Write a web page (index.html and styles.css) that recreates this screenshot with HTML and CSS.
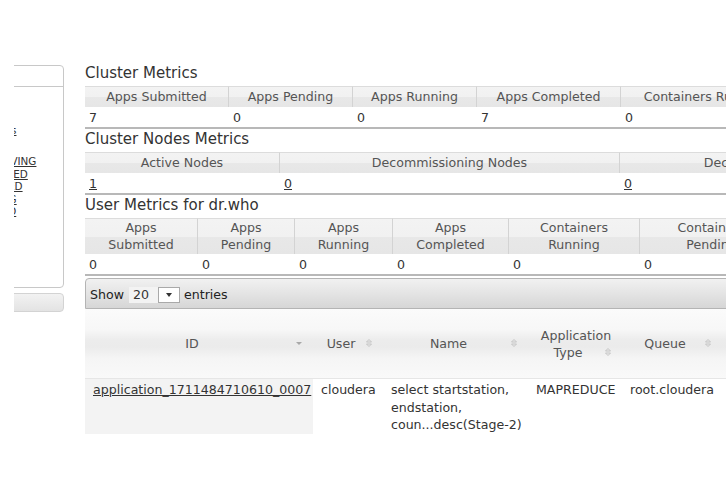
FILE: index.html
```html
<!DOCTYPE html>
<html>
<head>
<meta charset="utf-8">
<link rel="stylesheet" href="styles.css">
</head>
<body>
<div class="page">
  <aside class="nav-clip">
    <div class="nav">
      <div class="nav-box">
        <div class="nav-head">Cluster</div>
        <ul class="nav-list">
          <li><a href="#">About</a></li>
          <li><a href="#">Nodes</a></li>
          <li><a href="#">Applications</a>
            <ul class="nav-sub">
              <li><a href="#">NEW</a></li>
              <li><a href="#">NEW_SAVING</a></li>
              <li><a href="#">SUBMITTED</a></li>
              <li><a href="#">ACCEPTED</a></li>
              <li><a href="#">RUNNING</a></li>
              <li><a href="#">FINISHED</a></li>
              <li><a href="#">FAILED</a></li>
              <li><a href="#">KILLED</a></li>
            </ul>
          </li>
          <li><a href="#">Scheduler</a></li>
        </ul>
      </div>
      <div class="nav-tools">Tools</div>
    </div>
  </aside>

  <main class="main">
    <h3 class="title">Cluster Metrics</h3>
    <table class="metrics t-cluster">
      <colgroup><col class="w144"><col class="w124"><col class="w124"><col class="w144"><col class="w170"><col class="w120"><col class="w120"></colgroup>
      <thead><tr><th>Apps Submitted</th><th>Apps Pending</th><th>Apps Running</th><th>Apps Completed</th><th>Containers Running</th><th>Memory Used</th><th>Memory Total</th></tr></thead>
      <tbody><tr><td>7</td><td>0</td><td>0</td><td>7</td><td>0</td><td>0 B</td><td>4 GB</td></tr></tbody>
    </table>

    <h3 class="title">Cluster Nodes Metrics</h3>
    <table class="metrics t-nodes">
      <colgroup><col class="w195"><col class="w340"><col class="w320"><col class="w200"></colgroup>
      <thead><tr><th>Active Nodes</th><th>Decommissioning Nodes</th><th>Decommissioned Nodes</th><th>Lost Nodes</th></tr></thead>
      <tbody><tr><td><a href="#">1</a></td><td><a href="#">0</a></td><td><a href="#">0</a></td><td><a href="#">0</a></td></tr></tbody>
    </table>

    <h3 class="title">User Metrics for dr.who</h3>
    <table class="metrics user t-user">
      <colgroup><col class="w113"><col class="w97"><col class="w98"><col class="w116"><col class="w131"><col class="w144"><col class="w144"></colgroup>
      <thead><tr><th>Apps<br>Submitted</th><th>Apps<br>Pending</th><th>Apps<br>Running</th><th>Apps<br>Completed</th><th>Containers<br>Running</th><th>Containers<br>Pending</th><th>Containers<br>Reserved</th></tr></thead>
      <tbody><tr><td>0</td><td>0</td><td>0</td><td>0</td><td>0</td><td>0</td><td>0</td></tr></tbody>
    </table>

    <div class="apps">
      <div class="toolbar">
        <span class="lbl">Show</span>
        <span class="select"><span class="select-val">20</span><span class="select-btn"><svg width="6" height="4" viewBox="0 0 6 4"><path d="M0 0h6L3 4z" fill="#333"/></svg></span></span>
        <span class="lbl">entries</span>
      </div>
      <table class="apps-table">
        <colgroup><col class="w228"><col class="w70"><col class="w145"><col class="w94"><col class="w100"><col class="w120"><col class="w120"></colgroup>
        <thead>
          <tr>
            <th><div class="sw">ID<span class="si"><svg width="16" height="16" viewBox="0 0 16 16"><path d="M5 7h6l-3 3z" fill="#a8a8a8"/></svg></span></div></th>
            <th><div class="sw">User<span class="si"><svg width="16" height="16" viewBox="0 0 16 16"><path d="M5.5 7 8 4.5 10.5 7zM5.5 9 8 11.5 10.5 9z" fill="none" stroke="#c4c4c4" stroke-width="1"/></svg></span></div></th>
            <th><div class="sw">Name<span class="si"><svg width="16" height="16" viewBox="0 0 16 16"><path d="M5.5 7 8 4.5 10.5 7zM5.5 9 8 11.5 10.5 9z" fill="none" stroke="#c4c4c4" stroke-width="1"/></svg></span></div></th>
            <th><div class="sw">Application Type<span class="si"><svg width="16" height="16" viewBox="0 0 16 16"><path d="M5.5 7 8 4.5 10.5 7zM5.5 9 8 11.5 10.5 9z" fill="none" stroke="#c4c4c4" stroke-width="1"/></svg></span></div></th>
            <th><div class="sw">Queue<span class="si"><svg width="16" height="16" viewBox="0 0 16 16"><path d="M5.5 7 8 4.5 10.5 7zM5.5 9 8 11.5 10.5 9z" fill="none" stroke="#c4c4c4" stroke-width="1"/></svg></span></div></th>
            <th><div class="sw">StartTime<span class="si"></span></div></th>
            <th><div class="sw">FinishTime<span class="si"></span></div></th>
          </tr>
        </thead>
        <tbody>
          <tr>
            <td class="sorted"><a href="#">application_1711484710610_0007</a></td>
            <td>cloudera</td>
            <td>select startstation, endstation, coun...desc(Stage-2)</td>
            <td>MAPREDUCE</td>
            <td>root.cloudera</td>
            <td>Tue Mar 26 14:20:47 -0700 2024</td>
            <td>Tue Mar 26 14:21:09 -0700 2024</td>
          </tr>
        </tbody>
      </table>
    </div>
  </main>
</div>
</body>
</html>
```

FILE: styles.css
```css
* { box-sizing: border-box; }
html, body { margin: 0; padding: 0; }
body {
  width: 726px;
  height: 486px;
  overflow: hidden;
  background: #fff;
  color: #333;
  font-family: "DejaVu Sans", "Liberation Sans", sans-serif;
  font-size: 12.6px;
}
a { color: #333; }

.page {
  display: flex;
  align-items: flex-start;
  width: 1400px;
  padding-top: 63px;
}

/* left navigation (clipped) */
.nav-clip {
  flex: none;
  width: 50px;
  margin-left: 14px;
  margin-right: 21px;
  margin-top: 2px;
  overflow: hidden;
}
.nav {
  width: 130px;
  margin-left: -80px;
  font-size: 10.4px;
}
.nav-box {
  height: 223px;
  border: 1px solid #c8c8c8;
  border-radius: 0 4px 4px 0;
  background: #fff;
}
.nav-head {
  height: 21px;
  border-bottom: 1px solid #c8c8c8;
  padding: 4px 0 0 22px;
}
.nav-list {
  list-style: none;
  margin: 0;
  padding: 12px 0 0 18px;
  line-height: 12.5px;
}
.nav-sub {
  list-style: none;
  margin: 6px 0 0;
  padding: 0 0 0 14.4px;
}
.nav-tools {
  margin-top: 5px;
  height: 19px;
  border: 1px solid #d3d3d3;
  border-radius: 4px;
  background: linear-gradient(#f2f2f2, #e3e3e3);
  padding: 3px 0 0 26px;
  color: #555;
}

/* main column */
.main {
  flex: none;
  width: 1200px;
}
.title {
  margin: 0 0 2px;
  font-size: 15px;
  font-weight: normal;
  line-height: 21px;
  color: #333;
}

.metrics {
  border-collapse: separate;
  border-spacing: 0;
  table-layout: fixed;
}
.t-cluster { width: 946px; }
.t-nodes { width: 1055px; }
.t-user { width: 843px; }
.metrics th {
  font-weight: normal;
  color: #555;
  line-height: 17px;
  padding: 1px 4px 2px;
  background: linear-gradient(#f3f3f3 0, #f1f1f1 50%, #e8e8e8 50%, #e6e6e6 100%);
  border-top: 1px solid #dcdcdc;
  border-right: 1px solid #d3d3d3;
  text-align: center;
  vertical-align: middle;
  white-space: nowrap;
}
.metrics td {
  line-height: 17px;
  padding: 2px 4px 1px;
  border-bottom: 2px solid #b8b8b8;
  text-align: left;
  white-space: nowrap;
}
.user th { padding-top: 0; padding-bottom: 1px; }

.w70 { width: 70px; } .w94 { width: 94px; } .w97 { width: 97px; } .w98 { width: 98px; }
.w100 { width: 100px; } .w113 { width: 113px; } .w116 { width: 116px; } .w120 { width: 120px; }
.w124 { width: 124px; } .w131 { width: 131px; } .w144 { width: 144px; } .w145 { width: 145px; }
.w170 { width: 170px; } .w195 { width: 195px; } .w200 { width: 200px; } .w228 { width: 228px; }
.w320 { width: 320px; } .w340 { width: 340px; }

/* applications datatable */
.apps { margin-top: 2px; width: 877px; }
.toolbar {
  display: flex;
  align-items: center;
  height: 31px;
  padding: 2px 4px 0;
  border: 1px solid #b4b4b4;
  border-radius: 4px 0 0 0;
  background: linear-gradient(#f1f1f1 0, #e4e4e4 50%, #d6d6d6 100%);
  line-height: 17px;
}
.lbl { color: #222; }
.select {
  display: inline-flex;
  align-items: stretch;
  height: 16px;
  margin: 0 4px 0 5px;
  background: #f3f3f3;
}
.select-val {
  width: 30px;
  padding-left: 4px;
  line-height: 16px;
}
.select-btn {
  width: 22px;
  margin-left: -1px;
  border: 1px solid #a9a9a9;
  background: #fff;
  display: flex;
  align-items: center;
  justify-content: center;
}

.apps-table {
  width: 877px;
  border-collapse: separate;
  border-spacing: 0;
  table-layout: fixed;
}
.apps-table th {
  height: 70px;
  font-weight: normal;
  color: #555;
  line-height: 17px;
  padding: 0 6px 0 8px;
  vertical-align: middle;
  background: linear-gradient(#fbfbfb 0, #f7f7f7 30%, #ececec 45%, #ebebeb 55%, #f5f5f5 72%, #f9f9f9 100%);
  border-bottom: 1px solid #e6e6e6;
}
.sw { text-align: center; }
.si {
  float: right;
  width: 16px;
  height: 16px;
  display: block;
}
.si svg { display: block; }
.apps-table td {
  vertical-align: top;
  line-height: 17.5px;
  padding: 2px 4px 0 8px;
  text-align: left;
}
.apps-table td.sorted { background: #f3f3f3; }
```
